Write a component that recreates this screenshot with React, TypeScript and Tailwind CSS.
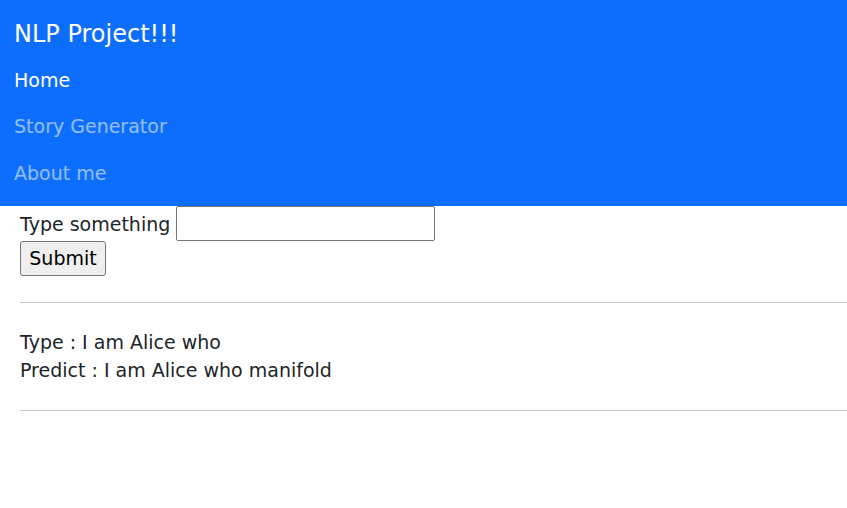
export default function App (): JSX.Element {
  return (
    <div className="min-h-[508px] bg-white font-['DejaVu_Sans',Verdana,sans-serif] text-[19px] text-[#212529]">
      <nav className="flex h-[206px] flex-col bg-[#0d6efd] pl-[14px]">
        <div className="flex h-[57px] items-center pt-[10px] text-[24px] text-white">NLP Project!!!</div>
        <a className="flex h-[46px] items-center text-white">Home</a>
        <a className="flex h-[47px] items-center text-white/55">Story Generator</a>
        <a className="flex h-[46px] items-center text-white/55">About me</a>
      </nav>

      <div className="pl-[20px]">
        <div className="flex h-[35px] items-center gap-[6px]">
          <label className="leading-[28px]">Type something</label>
          <input type="text" className="h-[35px] w-[259px] rounded-[2px] border border-[#767676] bg-white px-1" />
        </div>
        <button className="flex h-[35px] w-[86px] items-center justify-center rounded-[3px] border border-[#767676] bg-[#efefef] text-black">
          Submit
        </button>
        <hr className="mt-[26px] border-t border-[#c8c9ca]" />
        <div className="mt-[25px] leading-[28px]">
          <p>Type : I am Alice who</p>
          <p>Predict : I am Alice who manifold</p>
        </div>
        <hr className="mt-[26px] border-t border-[#c8c9ca]" />
      </div>
    </div>
  )
}
